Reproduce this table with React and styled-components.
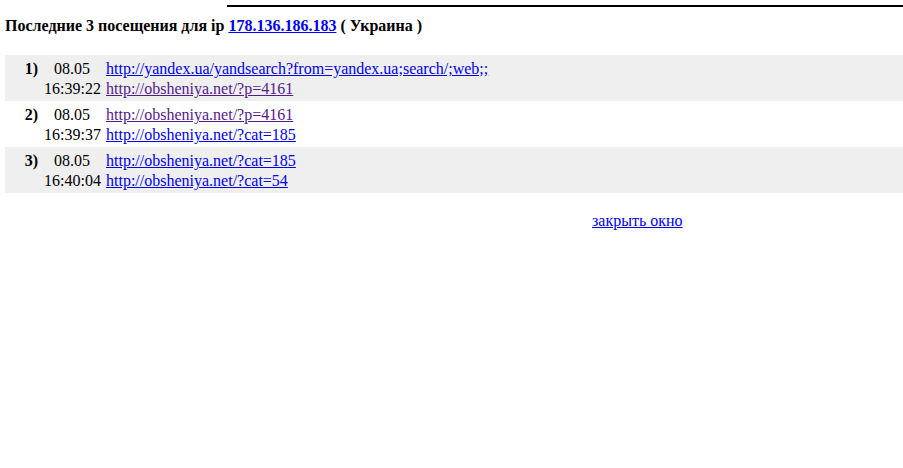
import React from "react";
import styled, { createGlobalStyle } from "styled-components";

const Global = createGlobalStyle`
  html, body { margin: 0; padding: 0; background: #fff; }
  body { font-family: "Liberation Serif", "Times New Roman", serif; font-size: 16px; color: #000; }
`;

const Page = styled.div`
  padding: 5px 0 0 5px;
`;

const Rule = styled.div`
  margin-left: 222px;
  height: 2px;
  background: #000;
`;

const Title = styled.h1`
  margin: 9px 0 0 0;
  font-size: 16px;
  font-weight: bold;
  line-height: 20px;
`;

const Link = styled.a`
  color: ${(p) => (p.$visited ? "#551A8B" : "#0000EE")};
  text-decoration: underline;
`;

const Visits = styled.div`
  margin-top: 19px;
  display: flex;
  flex-direction: column;
`;

const Visit = styled.div`
  display: grid;
  grid-template-columns: 39px 56px auto;
  background: ${(p) => (p.$shade ? "#efefef" : "#fff")};
  padding: 4px 0 2px 0;
  line-height: 20px;
`;

const Num = styled.div`
  font-weight: bold;
  text-align: right;
  padding-right: 6px;
`;

const When = styled.div`
  text-align: center;
  white-space: nowrap;
`;

const Urls = styled.div`
  display: flex;
  flex-direction: column;
  align-items: flex-start;
  padding-left: 6px;
`;

const Footer = styled.div`
  margin-top: 18px;
  padding-left: 587px;
  line-height: 20px;
`;

const visits = [
  {
    n: "1)",
    date: "08.05",
    time: "16:39:22",
    urls: [
      { u: "http://yandex.ua/yandsearch?from=yandex.ua;search/;web;;", v: false },
      { u: "http://obsheniya.net/?p=4161", v: true },
    ],
  },
  {
    n: "2)",
    date: "08.05",
    time: "16:39:37",
    urls: [
      { u: "http://obsheniya.net/?p=4161", v: true },
      { u: "http://obsheniya.net/?cat=185", v: false },
    ],
  },
  {
    n: "3)",
    date: "08.05",
    time: "16:40:04",
    urls: [
      { u: "http://obsheniya.net/?cat=185", v: false },
      { u: "http://obsheniya.net/?cat=54", v: false },
    ],
  },
];

export default function App() {
  return (
    <>
      <Global />
      <Page>
        <Rule />
        <Title>
          Последние 3 посещения для ip <Link href="#">178.136.186.183</Link> ( Украина )
        </Title>
        <Visits>
          {visits.map((v, i) => (
            <Visit key={i} $shade={i % 2 === 0}>
              <Num>{v.n}</Num>
              <When>
                {v.date}
                <br />
                {v.time}
              </When>
              <Urls>
                {v.urls.map((x, j) => (
                  <Link key={j} href="#" $visited={x.v}>
                    {x.u}
                  </Link>
                ))}
              </Urls>
            </Visit>
          ))}
        </Visits>
        <Footer>
          <Link href="#">закрыть окно</Link>
        </Footer>
      </Page>
    </>
  );
}
